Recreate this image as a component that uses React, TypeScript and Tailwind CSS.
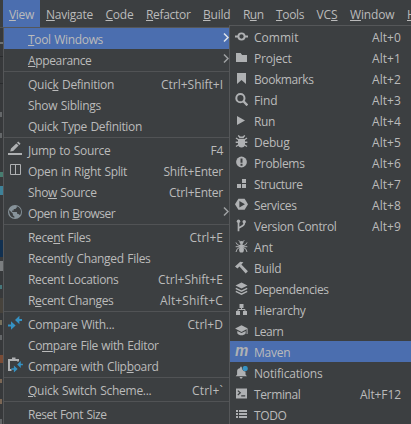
import { useLayoutEffect, useRef, useState, type ReactNode } from 'react';

/** Spreads the letters of a label over a given width. "_" marks the mnemonic that follows it. */
function Label({ text, width }: { text: string; width: number }) {
  const ref = useRef<HTMLSpanElement>(null);
  const [spacing, setSpacing] = useState(0);
  const at = text.indexOf('_');
  const plain = text.replace('_', '');
  useLayoutEffect(() => {
    if (ref.current) {
      const natural = ref.current.getBoundingClientRect().width;
      setSpacing((width - natural) / plain.length);
    }
  }, []);
  return (
    <span ref={ref} className="whitespace-pre [word-spacing:0.7px]" style={{ letterSpacing: `${spacing}px` }}>
      {at < 0 ? (
        plain
      ) : (
        <>
          {plain.slice(0, at)}
          <span className="underline decoration-1 underline-offset-[1px]">{plain[at]}</span>
          {plain.slice(at + 1)}
        </>
      )}
    </span>
  );
}

const toolIcons: Record<string, ReactNode> = {
  commit: (
    <>
      <path d="M0 5.5h3v2H0zM10 5.5h3v2h-3z" />
      <circle cx="6.5" cy="6.5" r="3.1" fill="none" stroke="currentColor" strokeWidth="1.9" />
    </>
  ),
  project: <path d="M1 2h4.6l1.5 2H12v7H1z" />,
  bookmarks: <path d="M2 1h9v11L6.5 8 2 12z" />,
  find: (
    <g fill="none" stroke="currentColor">
      <circle cx="5.4" cy="5.2" r="4.1" strokeWidth="2" />
      <path d="M8.2 8l4.2 4.3" strokeWidth="2.5" />
    </g>
  ),
  run: <path d="M2 2l8 4.5L2 11z" />,
  debug: (
    <>
      <path d="M4 3.2C4.2 1.8 5.2 1.4 6.5 1.4S8.8 1.8 9 3.2zM3 4h7v5.5C10 11.5 8.4 12.5 6.5 12.5S3 11.5 3 9.5z" />
      <path d="M3.2.4l2 2M9.8.4l-2 2M1 3l3 2M12 3L9 5M.7 7.2h3M12.3 7.2h-3M1 11.5l3-2M12 11.5l-3-2" fill="none" stroke="currentColor" strokeWidth="1.4" />
    </>
  ),
  problems: (
    <>
      <circle cx="6.5" cy="6" r="5.4" />
      <path d="M5.5 2.5h2v4.2h-2zM5.5 7.7h2v2h-2z" className="fill-[#3c3f41]" />
    </>
  ),
  structure: <path d="M7 2h4v4H7zM2 7h4v4H2zM7 7h4v4H7z" />,
  services: (
    <>
      <path d="M3.4.8h6.2L13 6.3l-3.4 5.5H3.4L0 6.3z" />
      <path d="M4.4 3l5.5 3.3-5.5 3.3z" className="fill-[#3c3f41]" />
    </>
  ),
  vcs: (
    <>
      <g fill="none" stroke="currentColor" strokeWidth="1.7">
        <path d="M3.5 1.8v10.5M9.2 3v1.5c0 2.6-3.6 3.2-5.2 4.2" />
      </g>
      <circle cx="3.5" cy="2.2" r="1.7" />
      <circle cx="9.2" cy="2.7" r="1.7" />
    </>
  ),
  ant: (
    <>
      <ellipse cx="6.5" cy="2.5" rx="1.9" ry="1.6" />
      <ellipse cx="6.5" cy="5.7" rx="1.8" ry="1.7" />
      <ellipse cx="6.5" cy="9.7" rx="2.4" ry="2.9" />
      <path d="M3.8.3l1.7 1.9M9.2.3L7.5 2.2M1 2.5l1.5 2.3 3 1M12 2.5l-1.5 2.3-3 1M.7 6.7h11.6M1 12l1.3-3.2 3-1.6M12 12l-1.3-3.2-3-1.6" fill="none" stroke="currentColor" strokeWidth="1" />
    </>
  ),
  build: <path d="M0 5.5L5.2.7l3.2.6-2 2.2L12.9 10.2l-2.2 2.2L4.5 5.5 2.4 7.4z" />,
  dependencies: (
    <>
      <path d="M6.5.4l6 3-6 3-6-3z" />
      <path d="M.8 6.3l5.7 2.8 5.7-2.8M.8 9.3l5.7 2.8 5.7-2.8" fill="none" stroke="currentColor" strokeWidth="1.5" />
    </>
  ),
  hierarchy: (
    <>
      <path d="M4.5 1h4v4h-4zM1 8h4v4H1zM8 8h4v4H8z" />
      <path d="M6.5 5v1.5M3 8.3V6.5h7v1.8" fill="none" stroke="currentColor" />
    </>
  ),
  learn: (
    <>
      <path d="M6.5 1.3l6.4 3.3-6.4 3.3L.1 4.6z" />
      <path d="M2.3 6.9l4.2 2.2 4.2-2.2v2.3c-1 1.4-2.5 2.1-4.2 2.1s-3.2-.7-4.2-2.1zM11.6 5h1v5h-1z" />
    </>
  ),
  notifications: (
    <>
      <path d="M5.2.8h1.6v1.3c.7 2.2 1.6 3.3 3.7 3.5v2.9l1.4 1.7H.7l1.4-1.7V5c0-1.8 1.2-2.7 3.1-3.1zM4.6 11h3c-.2 1-.8 1.5-1.5 1.5S4.8 12 4.6 11z" />
      <circle cx="10.2" cy="2.5" r="2.6" className="fill-[#3592c4]" />
    </>
  ),
  terminal: (
    <>
      <path d="M1 1.5h11v10H1z" />
      <path d="M2.8 3.6l2.5 2.2-2.5 2.2M6.2 8.8h4" fill="none" className="stroke-[#3c3f41]" strokeWidth="1.2" />
    </>
  ),
  todo: <path d="M1 2h2v2H1zM4 2h8v2H4zM1 5h2v2H1zM4 5h8v2H4zM1 8h2v2H1zM4 8h8v2H4z" />,
};

function ToolIcon({ name }: { name: string }) {
  if (name === 'maven') {
    return (
      <span className="flex w-[13px] justify-center font-['Liberation_Sans',sans-serif] text-[17px] leading-[11px] font-bold text-[#afb1b3] italic">
        <span className="scale-x-[0.88]">m</span>
      </span>
    );
  }
  return (
    <svg viewBox="0 0 13 13" className="h-[13px] w-[13px] text-[#afb1b3]" fill="currentColor">
      {toolIcons[name]}
    </svg>
  );
}

const compareArrows = (
  <path className="fill-[#3592c4]" d="M8 5l4.4-4.2V4H15v2h-2.6v3.2zM1 9.5h3V6.3L8.6 10.5 4 14.7v-3.2H1z" />
);

const actionIcons: Record<string, ReactNode> = {
  edit: (
    <>
      <path d="M1 12h14v2H1z" />
      <path d="M3.2 10.6l.8-3L9.3 2.4l2.3 2.2-5.4 5.3zM10 1.7l1.2-1.1 2.4 2.2-1.3 1.1z" />
    </>
  ),
  split: <path d="M3.5 2.5h10v10h-10zM8.5 2.5v10" fill="none" stroke="currentColor" />,
  web: (
    <>
      <circle cx="8" cy="8" r="7" className="fill-[#87939a]" />
      <path className="fill-[#3c3f41]" d="M2.2 6l3.7 3.7v1.5l1.5 1.3v1.3C4 13.5 1.8 10.5 2.2 6zM9.8 2.3v1.3L8.3 5H6.7v1.6H5.2v1.3h4.6l.6 2h1.1l1.5 1.4c1.2-1.7 1.4-4.1.5-6-.8-1.6-2.1-2.6-3.7-3z" />
    </>
  ),
  compare: compareArrows,
  clipboard: (
    <>
      <path d="M1 2h4V.5h3.5V2H12v2.5h-2V4H3v8h1.5v2H1z" />
      <g transform="translate(3.6 3.4) scale(.82)">{compareArrows}</g>
    </>
  ),
};

type Action = { text: string; w: number; keys?: string; kw?: number; icon?: string; sub?: boolean; active?: boolean };

const groups: Action[][] = [
  [
    { text: '_Tool Windows', w: 75, sub: true, active: true },
    { text: '_Appearance', w: 63.5, sub: true },
  ],
  [
    { text: 'Quic_k Definition', w: 86, keys: 'Ctrl+Shift+I', kw: 62 },
    { text: 'Show Siblings', w: 73 },
    { text: 'Quick Type Definition', w: 114 },
  ],
  [
    { text: '_Jump to Source', w: 82.5, keys: 'F4', kw: 12.5, icon: 'edit' },
    { text: 'Open in Right Split', w: 99, keys: 'Shift+Enter', kw: 59.5, icon: 'split' },
    { text: 'Sho_w Source', w: 68.5, keys: 'Ctrl+Enter', kw: 54 },
    { text: 'Open in _Browser', w: 87, sub: true, icon: 'web' },
  ],
  [
    { text: 'Rece_nt Files', w: 62.5, keys: 'Ctrl+E', kw: 33.5 },
    { text: 'Recently Changed Files', w: 122.5 },
    { text: 'Recent Locations', w: 90.5, keys: 'Ctrl+Shift+E', kw: 65 },
    { text: 'R_ecent Changes', w: 85.5, keys: 'Alt+Shift+C', kw: 63 },
  ],
  [
    { text: 'Compare With...', w: 86.5, keys: 'Ctrl+D', kw: 35.5, icon: 'compare' },
    { text: 'Co_mpare File with Editor', w: 130.5 },
    { text: 'Compare with Clip_board', w: 130.5, icon: 'clipboard' },
  ],
  [{ text: '_Quick Switch Scheme...', w: 123.5, keys: 'Ctrl+`', kw: 31 }],
  [{ text: 'Reset Font Size', w: 78.5 }],
];

const tools: { icon: string; text: string; w: number; keys?: string }[] = [
  { icon: 'commit', text: 'Commit', w: 44.5, keys: 'Alt+0' },
  { icon: 'project', text: 'Project', w: 37.5, keys: 'Alt+1' },
  { icon: 'bookmarks', text: 'Bookmarks', w: 59.5, keys: 'Alt+2' },
  { icon: 'find', text: 'Find', w: 23.5, keys: 'Alt+3' },
  { icon: 'run', text: 'Run', w: 21, keys: 'Alt+4' },
  { icon: 'debug', text: 'Debug', w: 35.5, keys: 'Alt+5' },
  { icon: 'problems', text: 'Problems', w: 50.5, keys: 'Alt+6' },
  { icon: 'structure', text: 'Structure', w: 48.5, keys: 'Alt+7' },
  { icon: 'services', text: 'Services', w: 42.5, keys: 'Alt+8' },
  { icon: 'vcs', text: 'Version Control', w: 82.5, keys: 'Alt+9' },
  { icon: 'ant', text: 'Ant', w: 19 },
  { icon: 'build', text: 'Build', w: 27.5 },
  { icon: 'dependencies', text: 'Dependencies', w: 74.5 },
  { icon: 'hierarchy', text: 'Hierarchy', w: 51.5 },
  { icon: 'learn', text: 'Learn', w: 29.5 },
  { icon: 'maven', text: 'Maven', w: 36.5 },
  { icon: 'notifications', text: 'Notifications', w: 68.5 },
  { icon: 'terminal', text: 'Terminal', w: 46.5, keys: 'Alt+F12' },
  { icon: 'todo', text: 'TODO', w: 32.5 },
];

function MenuBar() {
  return (
    <nav className="flex h-[27px] w-[430px] shrink-0 pl-[3px] leading-[29px]">
      <div className="w-[37px] shrink-0 bg-[#4b6eaf] pl-[6px]">
        <Label text="_View" width={25} />
      </div>
      <div className="flex gap-[12.5px] pl-[6px]">
        <Label text="_Navigate" width={47} />
        <Label text="_Code" width={28} />
        <Label text="_Refactor" width={44.5} />
        <Label text="_Build" width={27.5} />
        <Label text="R_un" width={20.5} />
        <Label text="_Tools" width={28} />
        <Label text="VC_S" width={21} />
        <Label text="_Window" width={44.5} />
        <Label text="_Help" width={26} />
      </div>
    </nav>
  );
}

function ActionRow({ a }: { a: Action }) {
  return (
    <div className={`flex h-[21px] leading-[23px] ${a.active ? 'bg-[#4b6eaf]' : ''}`}>
      <div className="w-6 shrink-0 pt-[2px] pl-[3px]">
        {a.icon && (
          <svg viewBox="0 0 16 16" className="h-4 w-4 text-[#afb1b3]" fill="currentColor">
            {actionIcons[a.icon]}
          </svg>
        )}
      </div>
      <Label text={a.text} width={a.w} />
      {a.keys && (
        <div className="ml-auto pr-[6px]">
          <Label text={a.keys} width={a.kw ?? 30} />
        </div>
      )}
      {a.sub && (
        <svg viewBox="0 0 6 21" className={`ml-auto h-[21px] w-1.5 ${a.active ? 'text-[#e0e4ea]' : 'text-[#a0a2a4]'}`} fill="none" stroke="currentColor" strokeWidth="1.5">
          <path d="M1 5.5l4 4-4 4" />
        </svg>
      )}
    </div>
  );
}

/** Sliver of the editor that stays visible beside the menu. */
function EditorEdge() {
  return (
    <div className="flex w-[3px] shrink-0 flex-col overflow-hidden border-t border-[#515151] bg-[#37393b]">
      <div className="mt-[14px] h-[2px] bg-[#6d7173]" />
      <div className="mt-[12px] h-px bg-[#292b2d]" />
      <div className="mt-[26px] h-px bg-[#292b2d]" />
      <div className="mt-[29px] h-[5px] w-[2px] bg-[#646769]" />
      <div className="mt-[16px] h-[6px] w-[2px] bg-[#646769]" />
      <div className="mt-[34px] h-[6px] bg-[#477d70]" />
      <div className="mt-[9px] h-[11px] bg-[#3e8299]" />
      <div className="mt-[45px] h-[20px] bg-[#113050]" />
      <div className="mt-[4px] h-[11px] bg-[#7b7e80]" />
      <div className="mt-[14px] h-[5px] w-[2px] bg-[#46777b]" />
      <div className="mt-[9px] h-[17px] bg-[#47433c]" />
      <div className="mt-[7px] h-[6px] w-[2px] bg-[#76705d]" />
      <div className="mt-[10px] h-[6px] w-[2px] bg-[#646769]" />
      <div className="mt-[15px] h-[9px] bg-[#7a4c36]" />
      <div className="mt-[16px] h-[5px] w-[2px] bg-[#7b6755]" />
      <div className="mt-[16px] h-[6px] w-[2px] bg-[#7b6755]" />
      <div className="mt-[15px] h-[6px] w-[2px] bg-[#646769]" />
    </div>
  );
}

export default function App() {
  return (
    <div className="relative flex h-[424px] w-[411px] flex-col overflow-hidden bg-[#3c3f41] font-['Open_Sans','Noto_Sans',sans-serif] text-[12px] text-[#bbbbbb]">
      <MenuBar />
      <div className="flex h-[397px]">
        <EditorEdge />
        <div className="w-[226px] border-t border-l border-[#555759]">
          {groups.map((g, i) => (
            <div key={i}>
              {i > 0 && (
                <div className="h-[3px] py-px">
                  <div className="h-px bg-[#515355]" />
                </div>
              )}
              {g.map((a) => (
                <ActionRow key={a.text} a={a} />
              ))}
            </div>
          ))}
        </div>
      </div>
      <div className="absolute top-[25px] left-[229px] h-[401px] w-[182px] border-t border-l border-[#555759] bg-[#3c3f41]">
        {tools.map((t) => (
          <div key={t.text} className={`flex h-[21px] pr-[10px] pl-[5px] leading-[23px] ${t.icon === 'maven' ? 'bg-[#4b6eaf]' : ''}`}>
            <div className="w-[19px] shrink-0 pt-[4px]">
              <ToolIcon name={t.icon} />
            </div>
            <Label text={t.text} width={t.w} />
            {t.keys && (
              <div className="ml-auto">
                <Label text={t.keys} width={t.keys.length > 5 ? 41 : 29} />
              </div>
            )}
          </div>
        ))}
      </div>
    </div>
  );
}
